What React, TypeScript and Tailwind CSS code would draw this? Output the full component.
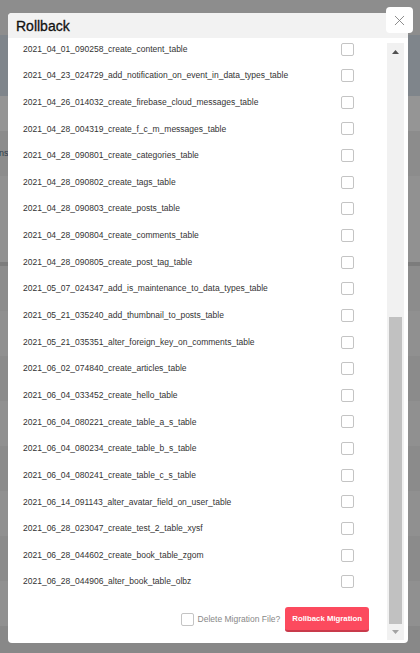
import { X } from 'lucide-react';

const migrations = [
  '2021_04_01_090258_create_content_table',
  '2021_04_23_024729_add_notification_on_event_in_data_types_table',
  '2021_04_26_014032_create_firebase_cloud_messages_table',
  '2021_04_28_004319_create_f_c_m_messages_table',
  '2021_04_28_090801_create_categories_table',
  '2021_04_28_090802_create_tags_table',
  '2021_04_28_090803_create_posts_table',
  '2021_04_28_090804_create_comments_table',
  '2021_04_28_090805_create_post_tag_table',
  '2021_05_07_024347_add_is_maintenance_to_data_types_table',
  '2021_05_21_035240_add_thumbnail_to_posts_table',
  '2021_05_21_035351_alter_foreign_key_on_comments_table',
  '2021_06_02_074840_create_articles_table',
  '2021_06_04_033452_create_hello_table',
  '2021_06_04_080221_create_table_a_s_table',
  '2021_06_04_080234_create_table_b_s_table',
  '2021_06_04_080241_create_table_c_s_table',
  '2021_06_14_091143_alter_avatar_field_on_user_table',
  '2021_06_28_023047_create_test_2_table_xysf',
  '2021_06_28_044602_create_book_table_zgom',
  '2021_06_28_044906_alter_book_table_olbz',
];

function Checkbox() {
  return <span className="block w-[13px] h-[13px] bg-white border border-[#c4c4c4] rounded-[2px] shrink-0" />;
}

export default function App() {
  return (
    <div className="relative w-[420px] h-[653px] overflow-hidden bg-[#8c8c8c] font-['Liberation_Sans',Arial,sans-serif]">
      {/* dimmed page behind the modal */}
      <div className="flex flex-col">
        <div className="h-[35px] bg-[#8d8d8d]" />
        <div className="h-[61px] bg-[#7f858b]" />
        <div className="h-[35px] bg-[#959595]" />
        <div className="h-[45px] bg-[#8c8c8c] flex items-center">
          <span className="text-[9px] text-[#2f3b4a] -ml-[1px]">ns</span>
        </div>
        <div className="h-[90px] bg-[#919191] border-b-[4px] border-[#7c7c7c]" />
        <div className="h-[45px] bg-[#8c8c8c]" />
        <div className="h-[45px] bg-[#909090]" />
        <div className="h-[45px] bg-[#8b8b8b]" />
        <div className="h-[45px] bg-[#909090]" />
        <div className="h-[45px] bg-[#8b8b8b]" />
        <div className="h-[45px] bg-[#909090]" />
        <div className="h-[45px] bg-[#8b8b8b]" />
        <div className="h-[45px] bg-[#909090]" />
        <div className="h-[45px] bg-[#888888]" />
      </div>

      {/* Modal */}
      <div className="absolute left-[8px] top-[13px] w-[400px] h-[630px] bg-white rounded-[4px] flex flex-col overflow-hidden">
        <div className="h-[25px] bg-[#f2f2f2] flex items-center pl-[8px]">
          <h2 className="text-[14px] text-[#111] leading-none [-webkit-text-stroke:0.3px_#111]">Rollback</h2>
        </div>
        <div className="flex-1 pt-[5px] pr-[4px] pb-[3px] flex min-h-0">
          <div className="flex-1 flex min-h-0">
            <div className="flex-1 overflow-hidden">
              <div className="-mt-[7.3px]">
                {migrations.map((m) => (
                  <div key={m} className="h-[26.65px] flex items-center justify-between pl-[15px] pr-[33px]">
                    <span className="text-[8.5px] text-[#333]">{m}</span>
                    <Checkbox />
                  </div>
                ))}
              </div>
              <div className="flex items-center justify-end pr-[18px] pt-[11.7px]">
                <Checkbox />
                <span className="ml-[4px] mr-[5px] text-[8.5px] text-[#888]">Delete Migration File?</span>
                <button className="h-[25px] px-[7px] bg-[#fc4a5e] border-b-2 border-[#c93a4b] rounded-[3px] text-white text-[7.8px] font-bold">
                  Rollback Migration
                </button>
              </div>
            </div>
            {/* scrollbar */}
            <div className="w-[17px] bg-[#f1f1f1] flex flex-col items-center">
              <div className="h-[17px] flex items-center justify-center">
                <svg width="7" height="4" viewBox="0 0 7 4"><path d="M0 4 L3.5 0 L7 4 Z" fill="#505050" /></svg>
              </div>
              <div className="flex-1 w-full flex flex-col justify-end px-[2px]">
                <div className="h-[307px] bg-[#c1c1c1]" />
              </div>
              <div className="h-[16px] flex items-center justify-center">
                <svg width="7" height="4" viewBox="0 0 7 4"><path d="M0 0 L7 0 L3.5 4 Z" fill="#a3a3a3" /></svg>
              </div>
            </div>
          </div>
        </div>
      </div>

      {/* Close button */}
      <button className="absolute left-[386px] top-[7px] w-[27px] h-[26px] bg-white rounded-[4px] flex items-center justify-center">
        <X className="w-[17px] h-[17px] text-[#7a7a7a]" strokeWidth={1.2} />
      </button>
    </div>
  );
}
